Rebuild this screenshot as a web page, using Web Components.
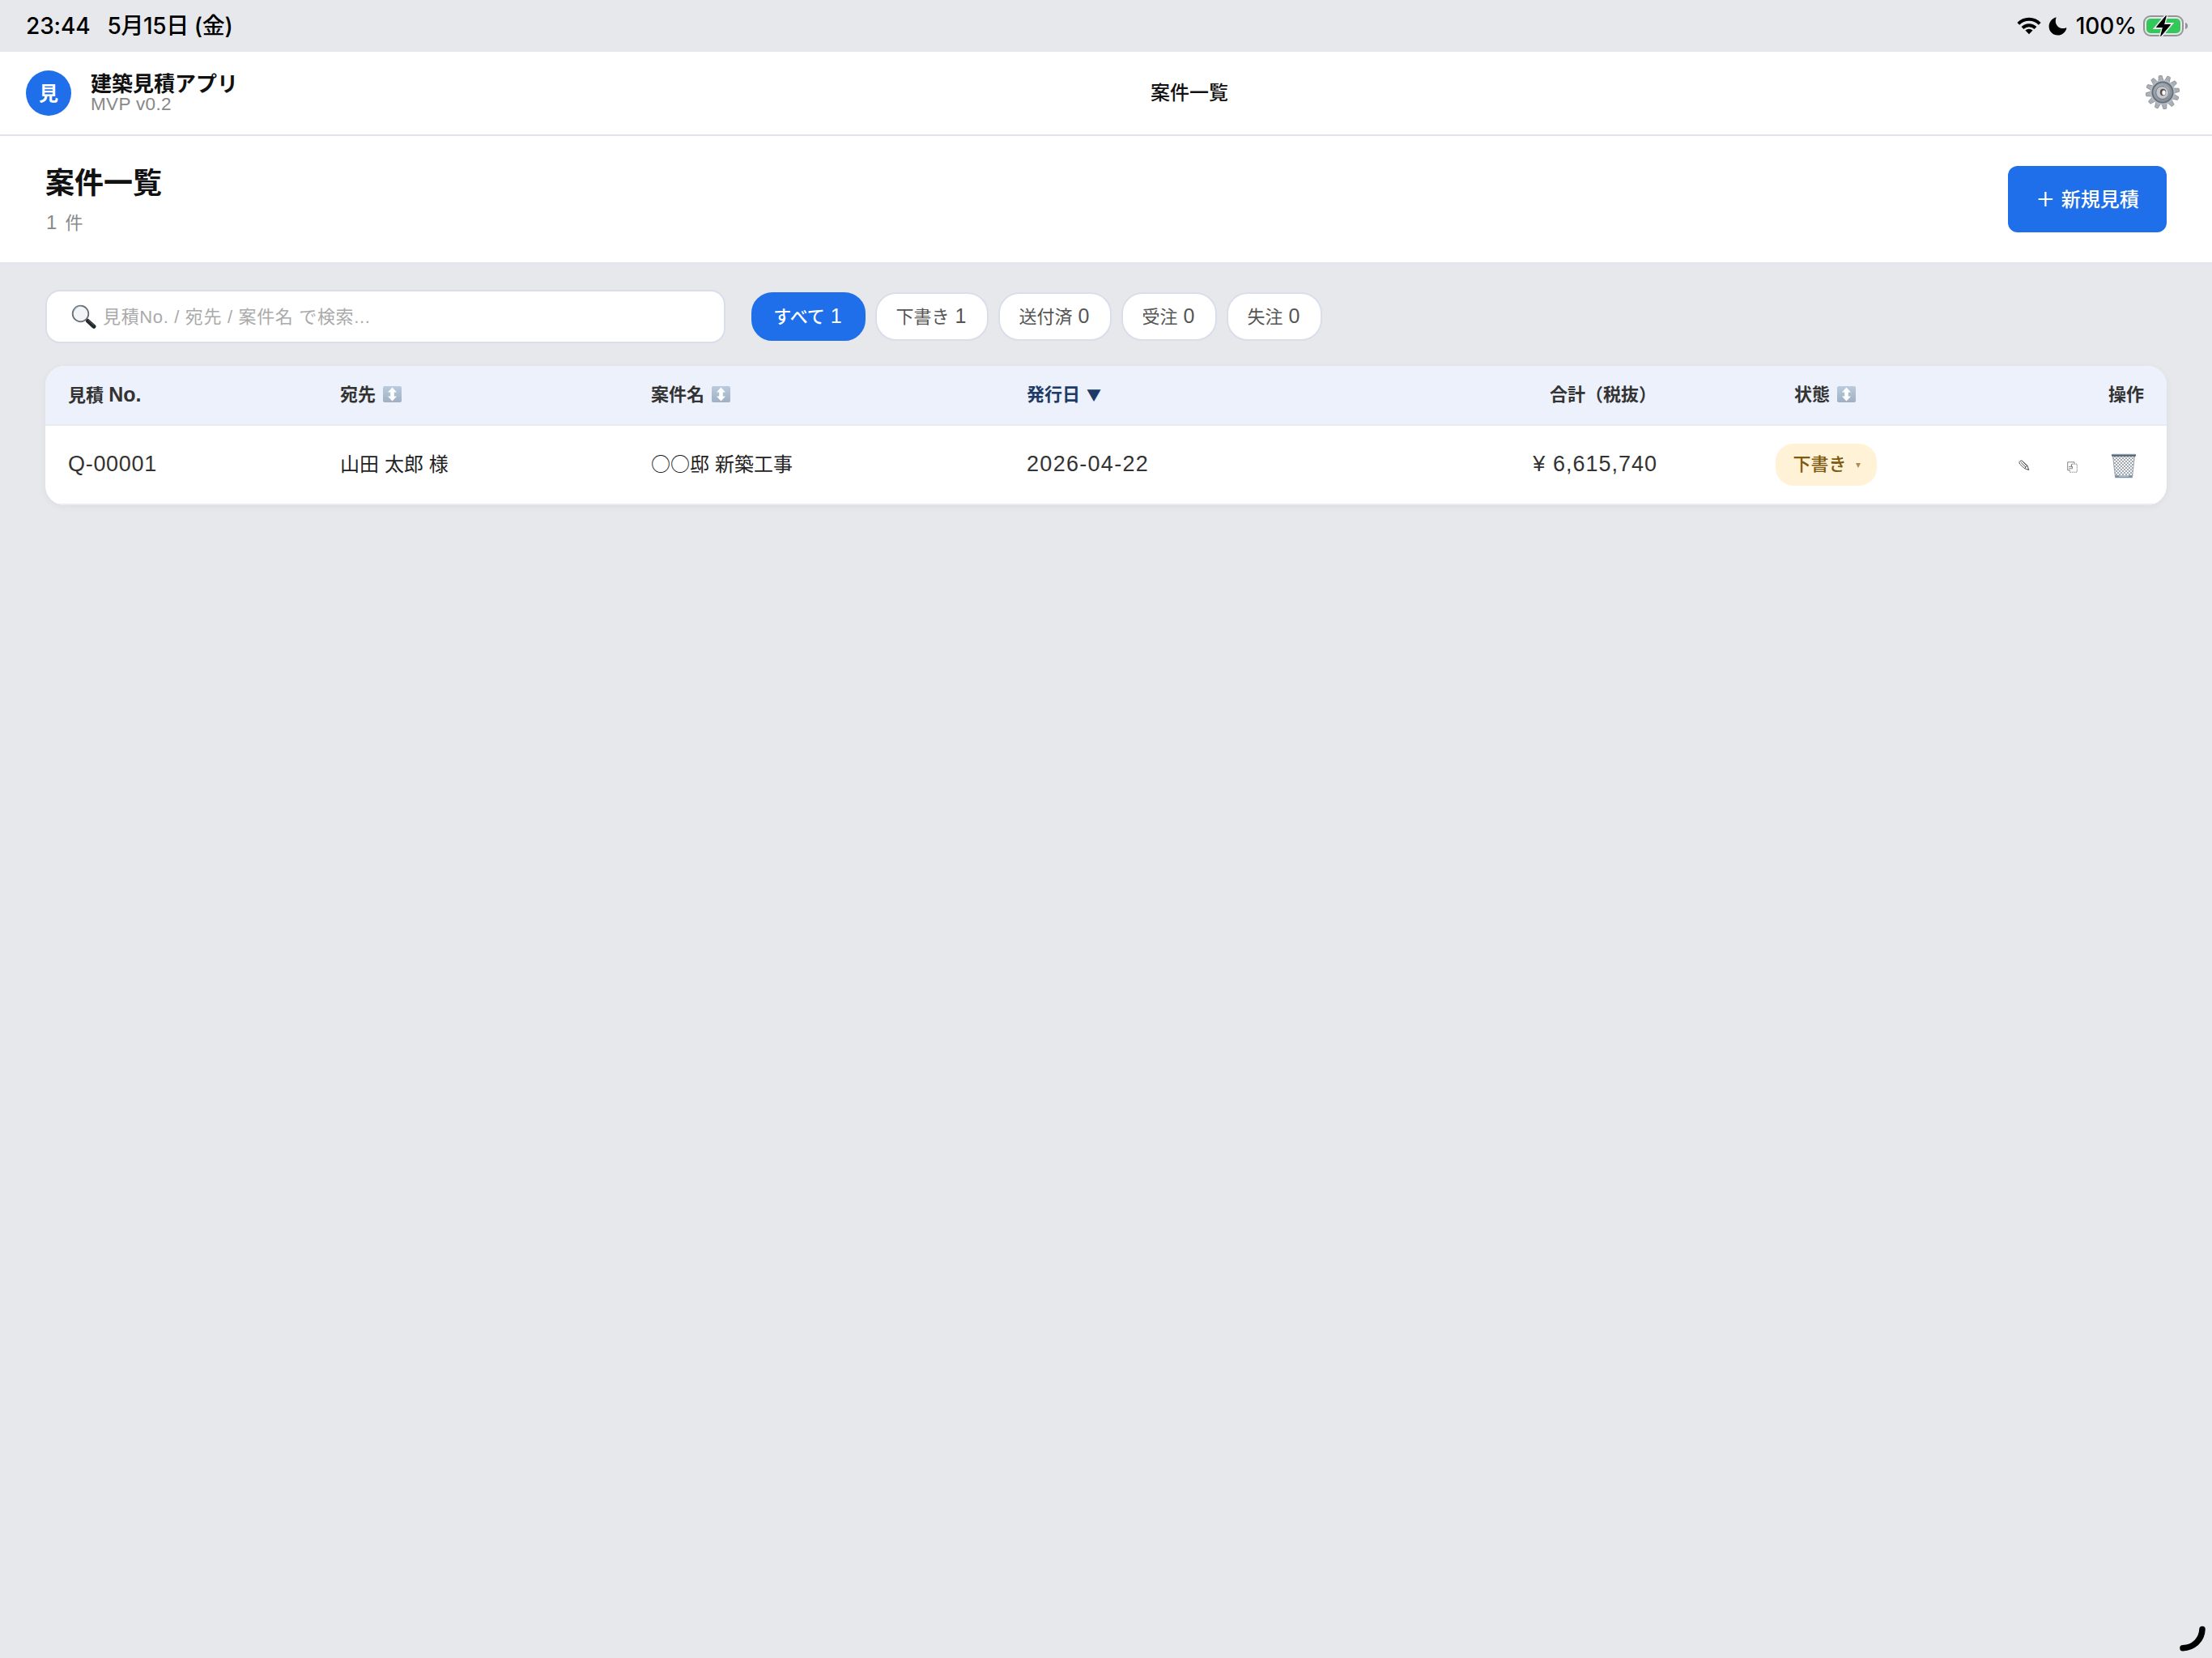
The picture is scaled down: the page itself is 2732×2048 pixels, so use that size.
<!DOCTYPE html>
<html lang="ja">
<head>
<meta charset="utf-8">
<title>建築見積アプリ</title>
<style>
	html, body { margin: 0; height: 100%; }
	body {
		background: #e6e8ec;
		color: #222;
		font-family: "Liberation Sans", "Noto Sans CJK JP", sans-serif;
		overflow: hidden;
	}
</style>
</head>
<body>
<estimate-app></estimate-app>

<script>
(function () {
	const define = (name, html) => {
		window.customElements.define(name, class extends HTMLElement {
			constructor() {
				super();
				this._root = this.attachShadow({ mode: 'open' });
				this._root.innerHTML = html;
			}
		});
	};

	define('status-bar', `
      <style>
        :host {
          display: flex; align-items: center; justify-content: space-between;
          height: 64px; box-sizing: border-box; padding: 0 29px 0 32px;
          font: 500 28px/64px Inter, "Noto Sans CJK JP", sans-serif; color: #000;
        }
        .left { display: flex; gap: 21px; }
        .time { letter-spacing: -0.1px; }
        .date { letter-spacing: -0.4px; }
        .right { display: flex; align-items: center; }
        .pct { margin: 0 8px 0 11px; letter-spacing: -0.1px; }
        svg { display: block; }
        .moon { margin-left: 9px; }
      </style>
      <div class="left"><span class="time">23:44</span><span class="date">5月15日 (金)</span></div>
      <div class="right">
        <svg width="30" height="22" viewBox="0 0 30 22">
          <g fill="none" stroke="#000" stroke-width="4">
            <path d="M1.8 8.3a18.6 18.6 0 0 1 26.4 0"/>
            <path d="M7 13.5a11.3 11.3 0 0 1 16 0"/>
          </g>
          <path d="M15 21.2l-4.6-4.6a6.5 6.5 0 0 1 9.2 0z"/>
        </svg>
        <svg class="moon" width="23" height="23" viewBox="0 0 23 23">
          <path d="M8.8.5c.7-.3 1 .1.7.8-1.400 3.500-.7 7.600 1.900 10.200 2.700 2.700 6.600 3.200 10 1.900.7-.3 1.100.1.900.8C20.800 19.200 16.600 22.500 11.600 22.500 5.400 22.500.6 17.800.6 11.500.6 6.500 4.100 2 8.800.5z"/>
        </svg>
        <span class="pct">100%</span>
        <svg width="56" height="30" viewBox="0 0 56 30">
          <rect x="1" y="3" width="48" height="24" rx="8" fill="none" stroke="#929497" stroke-width="2"/>
          <path d="M52 11c2 .6 3 2 3 4s-1 3.400-3 4z" fill="#929497"/>
          <rect x="4" y="6" width="42" height="18" rx="5" fill="#34c759"/>
          <path d="M28.500 2L16 17h8.500L21.500 28 34 13h-8.500z" stroke="#e6e8ec" stroke-width="4"/>
          <path d="M28.300 2.500L16.500 16.500h8L21.700 27.500 33.500 13.500h-8z" stroke="#000" stroke-width="1" stroke-linejoin="round"/>
        </svg>
      </div>
	`);

	define('app-header', `
      <style>
        :host {
          display: grid; grid-template-columns: 1389px 162px 1fr; align-items: center;
          height: 104px; box-sizing: border-box; padding: 0 40px 0 32px;
          background: #fff; border-bottom: 2px solid #e0e3ee; color: #111;
        }
        .brand { display: flex; align-items: center; gap: 24px; }
        .logo {
          width: 56px; height: 56px; border-radius: 50%; background: #1f6feb; color: #fff;
          text-align: center; font: bold 24px/54px "Noto Sans CJK JP", sans-serif;
        }
        .name { font: bold 26px/26px "Noto Sans CJK JP", sans-serif; }
        .version { font-size: 22.500px; line-height: 27px; color: #888; letter-spacing: .35px; }
        .title { font: 500 24px/34px "Noto Sans CJK JP", sans-serif; padding-bottom: 5px; }
        svg { justify-self: end; margin: 0 0 2px 0; }
      </style>
      <div class="brand">
        <div class="logo">見</div>
        <div><div class="name">建築見積アプリ</div><div class="version">MVP v0.2</div></div>
      </div>
      <div class="title"><slot></slot></div>
      <svg width="42" height="42" viewBox="-21 -21 42 42">
        <defs>
          <linearGradient id="m" x1="0" y1="0" x2="1" y2="1"><stop offset="0" stop-color="#aeb4bb"/><stop offset="1" stop-color="#7f858d"/></linearGradient>
        </defs>
        <g id="teeth"></g>
        <circle r="15.500" fill="#b4bbc4"/>
        <circle r="13.500" fill="#656c74"/>
        <circle r="11.500" fill="url(#m)" stroke="#858d96"/>
        <circle cx=".5" r="8" fill="#c4c9d0"/>
        <circle cx="-.5" cy=".5" r="8" fill="none" stroke="#757d86" stroke-width="1"/>
        <ellipse cx=".5" rx="3.600" ry="4.200" fill="#5d4c46"/>
        <ellipse cx="1.500" cy=".6" rx="2.200" ry="3" fill="#fff"/>
      </svg>
	`);

	define('page-heading', `
      <style>
        :host {
          display: flex; align-items: center; justify-content: space-between;
          height: 158px; box-sizing: border-box; padding: 0 56px;
          background: #fff; border-bottom: 2px solid #e2e5ed;
        }
        h1 { margin: 0; font: bold 36px/50px "Noto Sans CJK JP", sans-serif; color: #111; }
        .count { margin-top: 9px; font-size: 22px; line-height: 36px; color: #888; word-spacing: 4px; padding-left: 1px; }
        .count span { font-size: 24px; }
        button {
          width: 196px; height: 82px; padding: 0 0 3px 0; border: 0; border-radius: 12px;
          background: #1f6feb; color: #fff; font: 500 24px/34px "Noto Sans CJK JP", sans-serif; word-spacing: 2px;
        }
      </style>
      <div><h1>案件一覧</h1><div class="count"><span>1</span> 件</div></div>
      <button>＋ 新規見積</button>
	`);

	define('search-box', `
      <style>
        :host {
          display: flex; align-items: center; width: 840px; height: 66px; box-sizing: border-box;
          padding: 2px 30px 0; gap: 8px; background: #fff; border: 2px solid #dadeeb; border-radius: 18px;
          color: #aaa; font-size: 22px; line-height: 32px; letter-spacing: .66px; white-space: pre;
        }
        svg { margin-bottom: 2px; }
      </style>
      <svg width="31" height="31" viewBox="0 0 31 31">
        <path d="M18 18l4 4" stroke="#777" stroke-width="3"/>
        <path d="M20.500 20.500l7.500 6.800" stroke="#22272b" stroke-width="5" stroke-linecap="round"/>
        <path d="M21 19.500l7 6.300" stroke="#59616a" stroke-width="1"/>
        <circle cx="11.500" cy="11.500" r="9.800" fill="#f3f4f5" stroke="#686f77" stroke-width="1.800"/>
        <path d="M3.500 8a9 9 0 0 1 9-5.700" fill="none" stroke="#9bb5ce" stroke-width="1.200"/>
      </svg>
      <span><slot></slot></span>
	`);

	define('filter-chip', `
      <style>
        :host {
          display: block; height: 60px; box-sizing: border-box; border: 2px solid #dadeeb; border-radius: 26px;
          background: #fff; color: #555; text-align: center; font-size: 22px; line-height: 55px;
        }
        :host([active]) { background: #1f6feb; border-color: #1f6feb; color: #fff; font-weight: 500; }
        .n { font-size: 25px; margin-left: 7px; padding-right: 2px; }
      </style>
      <slot></slot><span class="n"><slot name="count"></slot></span>
	`);

	define('sort-icon', `
      <style>:host { display: inline-block; width: 23px; height: 20px; margin-left: 9px; vertical-align: -2px; } svg { display: block; }</style>
      <svg width="23" height="20" viewBox="0 0 23 20">
        <defs><linearGradient id="g" x2="0" y2="1"><stop offset="0" stop-color="#b9cbdd"/><stop offset="1" stop-color="#a0b0c2"/></linearGradient></defs>
        <rect width="23" height="20" rx="2" fill="url(#g)"/>
        <path d="M11.500 1.500l5.500 6h-3.200v5H17l-5.500 6-5.500-6h3.200v-5H6z" fill="#fff"/>
      </svg>
	`);

	define('status-pill', `
      <style>
        :host {
          display: flex; align-items: center; width: 125px; height: 52px; box-sizing: border-box; padding-left: 22px;
          border-radius: 22px; background: #fff2d6; color: #7d5a10; font-weight: 500; font-size: 22px; line-height: 52px;
        }
        svg { margin: 2px 0 0 11px; opacity: .65; }
      </style>
      <slot></slot><svg width="6" height="6" viewBox="0 0 6 6"><path d="M0 0h6L3 6z" fill="#7d5a10"/></svg>
	`);

	define('row-actions', `
      <style>
        :host { display: flex; align-items: center; justify-content: flex-end; padding: 2px 10px 0 0; }
        .edit { margin-right: 46px; }
        .copy { margin: 3px 42px 0 0; }
      </style>
      <svg class="edit" width="14" height="14" viewBox="0 0 14 14" fill="none" stroke="#444" stroke-width=".9">
        <path d="M1 3.200C1.200 1.700 2.600.8 4.200 1L11 7.200l1.700 5.300L7.600 10.700 1.400 5z"/>
        <path d="M2.800 3L9 9M4.500 1.600l6 6M7.600 10.700L9 9l2-1.800M11.600 11.200l1.100 1.300"/>
      </svg>
      <svg class="copy" width="13" height="14" viewBox="0 0 13 14" fill="none" stroke="#666" stroke-width=".8">
        <path d="M3.300 10.800H.7V.8h8.300v2"/>
        <path d="M5.800 3.200h6.500v10H3.300v-3" stroke-dasharray="1.500 .9"/>
        <path d="M2 6.600h4.500v2.200H2.200M4.500 5l2.200 1.600M5.500 3.200v3"/>
      </svg>
      <svg width="30" height="31" viewBox="0 0 30 31">
        <defs>
          <pattern id="mesh" width="4" height="4" patternUnits="userSpaceOnUse"><path d="M0 0l4 4M4 0L0 4" stroke="#8c949d" stroke-width=".8"/></pattern>
        </defs>
        <path d="M1.500 3h27L25.500 29.500h-21z" fill="#f4f6f7"/>
        <path d="M1.500 3h27L25.500 29.500h-21z" fill="url(#mesh)" stroke="#8b939c" stroke-width=".8"/>
        <path d="M4.200 27.200h21.600l-.5 3H4.700z" fill="#7b8fa3"/>
        <path d="M9 28h12" stroke="#b8c8d5" stroke-width="1.500"/>
        <rect x="0" y="1" width="30" height="2.800" rx="1" fill="#566370"/>
        <path d="M1 1.200h28" stroke="#a3b3c0" stroke-width="1"/>
      </svg>
	`);

	define('quote-table', `
      <style>
        :host {
          display: block; border-radius: 24px; overflow: hidden; background: #fff;
          box-shadow: 0 2px 10px rgba(0, 0, 0, .05);
        }
        .row {
          display: grid; grid-template-columns: 336px 384px 464px 300px 478px 416px 1fr; align-items: center;
          padding: 0 28px; border-bottom: 2px solid #e9ebf0; height: 96px;
          font-size: 24px; line-height: 34px; color: #222; white-space: nowrap;
        }
        .head { height: 72px; background: #edf1fb; color: #333; font-size: 22px; font-weight: bold; }
        .sum, .end { text-align: right; }
        .center { justify-self: center; }
        .row:not(.head) .center { margin-left: 2px; }
        .sorted { color: #1e3a66; }
        .arrow { font: 18px/20px "Noto Sans CJK JP", sans-serif; margin-left: 8px; }
        .latin { font-size: 25px; }
        .text { font-family: "Noto Sans CJK JP", sans-serif; padding-bottom: 4px; word-spacing: 1.500px; }
        .num { font-size: 27px; color: #333; letter-spacing: .7px; padding-bottom: 2px; }
        .date { letter-spacing: 1.300px; }
        .num.sum { letter-spacing: 1px; margin-right: -1px; }
      </style>
      <div class="row head">
        <div>見積 <span class="latin">No.</span></div>
        <div>宛先<sort-icon></sort-icon></div>
        <div>案件名<sort-icon></sort-icon></div>
        <div class="sorted">発行日<span class="arrow">▼</span></div>
        <div class="sum">合計（税抜）</div>
        <div class="center">状態<sort-icon></sort-icon></div>
        <div class="end">操作</div>
      </div>
      <div class="row">
        <div class="num">Q-00001</div>
        <div class="text">山田 太郎 様</div>
        <div class="text">○○邸 新築工事</div>
        <div class="num date">2026-04-22</div>
        <div class="num sum">¥ 6,615,740</div>
        <div class="center"><status-pill>下書き</status-pill></div>
        <row-actions></row-actions>
      </div>
	`);

	define('estimate-app', `
      <style>
        :host { display: block; height: 100vh; }
        main { padding: 32px 56px 0; }
        .tools { display: flex; align-items: center; margin-bottom: 28px; }
        .filters { display: grid; grid-template-columns: 141px 140px 140px 118px 118px; gap: 12px; margin-left: 32px; }
        .grip { position: absolute; right: 0; bottom: 0; }
      </style>
      <status-bar></status-bar>
      <app-header>案件一覧</app-header>
      <page-heading></page-heading>
      <main>
        <div class="tools">
          <search-box>見積No. / 宛先 / 案件名 で検索...</search-box>
          <div class="filters">
            <filter-chip active>すべて<span slot="count">1</span></filter-chip>
            <filter-chip>下書き<span slot="count">1</span></filter-chip>
            <filter-chip>送付済<span slot="count">0</span></filter-chip>
            <filter-chip>受注<span slot="count">0</span></filter-chip>
            <filter-chip>失注<span slot="count">0</span></filter-chip>
          </div>
        </div>
        <quote-table></quote-table>
      </main>
      <svg class="grip" width="80" height="80" viewBox="0 0 80 80">
        <path d="M68 44.500C67.500 57 58 67 44 67.800" fill="none" stroke="#000" stroke-width="7.500" stroke-linecap="round"/>
      </svg>
	`);

	// twelve slightly tapered teeth round the gear
	const gear = document.querySelector('estimate-app').shadowRoot.querySelector('app-header').shadowRoot.querySelector('#teeth');
	let teeth = '';
	for (let i = 0; i < 12; i++) {
		teeth += `<path d="M-3-14L-2-20.500Q0-21.300 2-20.500L3-14z" fill="#a9b0b9" stroke="#7c7a7b" stroke-width=".6" transform="rotate(${i * 30 - 8})"/>`;
	}
	gear.innerHTML = teeth;
})();
</script>
</body>
</html>
